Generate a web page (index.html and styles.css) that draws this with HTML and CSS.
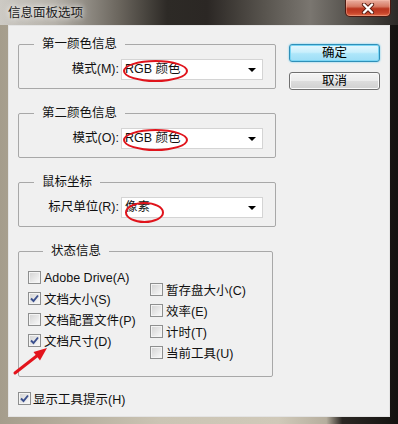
FILE: index.html
```html
<!DOCTYPE html>
<html lang="zh-CN">
<head>
    <meta charset="UTF-8">
    <meta name="viewport" content="width=device-width, initial-scale=1.0">
    <title>信息面板选项</title>
    <link rel="stylesheet" href="styles.css">
</head>
<body>
    <div class="window">
        <div class="titlebar">
            <span class="title">信息面板选项</span>
            <button class="close" aria-label="关闭">
                <svg width="14" height="11" viewBox="0 0 14 11">
                    <path d="M3 1.5 L11 9.5 M11 1.5 L3 9.5" stroke="#5a1d12" stroke-width="4.2" stroke-linecap="round"/>
                    <path d="M3 1.5 L11 9.5 M11 1.5 L3 9.5" stroke="#ffffff" stroke-width="2.4" stroke-linecap="round"/>
                </svg>
            </button>
        </div>

        <div class="frame">
            <div class="client">
                <div class="main">
                    <fieldset class="group">
                        <legend>第一颜色信息</legend>
                        <div class="field">
                            <label class="field-label">模式(M):</label>
                            <div class="combo">
                                <span class="combo-value">RGB 颜色</span>
                                <span class="combo-arrow"></span>
                                <span class="mark mark-wide"></span>
                            </div>
                        </div>
                    </fieldset>

                    <fieldset class="group">
                        <legend>第二颜色信息</legend>
                        <div class="field">
                            <label class="field-label">模式(O):</label>
                            <div class="combo">
                                <span class="combo-value">RGB 颜色</span>
                                <span class="combo-arrow"></span>
                                <span class="mark mark-wide"></span>
                            </div>
                        </div>
                    </fieldset>

                    <fieldset class="group">
                        <legend>鼠标坐标</legend>
                        <div class="field">
                            <label class="field-label">标尺单位(R):</label>
                            <div class="combo">
                                <span class="combo-value">像素</span>
                                <span class="combo-arrow"></span>
                                <span class="mark mark-short"></span>
                            </div>
                        </div>
                    </fieldset>

                    <fieldset class="group group-status">
                        <legend>状态信息</legend>
                        <div class="checks">
                            <div class="check-col">
                                <label class="check"><span class="box"></span>Adobe Drive(A)</label>
                                <label class="check"><span class="box"><svg width="11" height="11" viewBox="0 0 11 11"><path d="M2 5.5 L4.5 8 L9 2.5" fill="none" stroke="#3a4f8d" stroke-width="1.9"/></svg></span>文档大小(S)</label>
                                <label class="check"><span class="box"></span>文档配置文件(P)</label>
                                <label class="check"><span class="box"><svg width="11" height="11" viewBox="0 0 11 11"><path d="M2 5.5 L4.5 8 L9 2.5" fill="none" stroke="#3a4f8d" stroke-width="1.9"/></svg></span>文档尺寸(D)</label>
                            </div>
                            <div class="check-col check-col-right">
                                <label class="check"><span class="box"></span>暂存盘大小(C)</label>
                                <label class="check"><span class="box"></span>效率(E)</label>
                                <label class="check"><span class="box"></span>计时(T)</label>
                                <label class="check"><span class="box"></span>当前工具(U)</label>
                            </div>
                        </div>
                    </fieldset>

                    <label class="check check-tips"><span class="box"><svg width="11" height="11" viewBox="0 0 11 11"><path d="M2 5.5 L4.5 8 L9 2.5" fill="none" stroke="#3a4f8d" stroke-width="1.9"/></svg></span>显示工具提示(H)</label>
                </div>

                <div class="actions">
                    <button class="btn btn-default">确定</button>
                    <button class="btn">取消</button>
                </div>

                <!-- 红色箭头标注 -->
                <svg class="arrow" width="40" height="35" viewBox="0 0 40 35">
                    <path d="M5 30 L28 12" stroke="#e3141c" stroke-width="3" stroke-linecap="round"/>
                    <path d="M37 5 L30 17.5 L23.5 9 Z" fill="#e3141c"/>
                </svg>
            </div>
        </div>
    </div>
</body>
</html>
```

FILE: styles.css
```css
* {
    box-sizing: border-box;
}

body {
    margin: 0;
    font-family: "Liberation Sans", "Noto Sans CJK SC", sans-serif;
    font-size: 12.5px;
    color: #111;
}

.window {
    width: 398px;
    height: 424px;
    display: flex;
    flex-direction: column;
}

.titlebar {
    height: 25px;
    display: flex;
    justify-content: space-between;
    align-items: flex-start;
    background: linear-gradient(90deg, #cdcac4 0%, #b4b0a8 14%, #6a655d 30%, #2d2a26 42%, #2b2724 52%, #57534d 66%, #7a7670 78%, #54514c 88%, #2c2926 100%);
}

.title {
    padding: 5px 0 0 8px;
    font-size: 12.5px;
    line-height: 16px;
    color: #1c1c1c;
    text-shadow: 0 0 5px rgba(255, 255, 255, 0.9), 0 0 9px rgba(255, 255, 255, 0.7);
}

.close {
    width: 46px;
    height: 17px;
    margin-right: 7px;
    padding: 0;
    display: flex;
    align-items: center;
    justify-content: center;
    border: 1px solid #4a1a12;
    border-top: none;
    border-radius: 0 0 5px 5px;
    background: linear-gradient(#eab0a2 0%, #d77a64 40%, #b9341d 55%, #c7432a 80%, #e06a45 100%);
    box-shadow: inset 0 0 0 1px rgba(255, 200, 180, 0.4);
}

.frame {
    flex: 1;
    padding: 0 8px 7px 8px;
    background: linear-gradient(90deg, #a59d8c 0%, #cbc4b4 40%, #d0c9b9 70%, #b6ae9e 82%, #2b2723 86%, #141210 100%);
}

.client {
    position: relative;
    height: 392px;
    display: flex;
    padding: 11px 0 0 10px;
    background: #f0f0f0;
    box-shadow: inset 0 0 0 1px #e4e4e4;
}

.main {
    width: 258px;
    display: flex;
    flex-direction: column;
}

.group {
    margin: 0 0 16px 0;
    padding: 7px 0 8px 0;
    border: 1px solid #a8a8a8;
    border-radius: 2px;
    min-width: 0;
}

.group legend {
    margin-left: 15px;
    padding: 0 8px;
    line-height: 16px;
    font-size: 12.5px;
}

.field {
    display: flex;
    align-items: center;
    height: 21px;
}

.field-label {
    width: 100px;
    text-align: right;
    line-height: 21px;
}

.combo {
    position: relative;
    width: 142px;
    height: 21px;
    margin-left: 2px;
    display: flex;
    align-items: center;
    padding: 0 6px 0 3px;
    background: #fff;
    border: 1px solid #d4d4d4;
}

.combo-value {
    line-height: 19px;
}

.combo-arrow {
    margin-left: auto;
    width: 0;
    height: 0;
    border-left: 4px solid transparent;
    border-right: 4px solid transparent;
    border-top: 4px solid #000;
}

.mark {
    position: absolute;
    left: 1px;
    top: 0;
    height: 22px;
    border: 2px solid #e0141c;
    border-radius: 50%;
}

.mark-wide {
    width: 65px;
}

.mark-short {
    left: 3px;
    top: 4px;
    width: 39px;
    height: 21px;
}

.group-status {
    padding: 8px 0 13px 9px;
    width: 255px;
}

.checks {
    display: flex;
}

.check-col {
    width: 129px;
    display: flex;
    flex-direction: column;
}

.check-col-right {
    padding-top: 12px;
}

.check {
    display: flex;
    align-items: center;
    gap: 3px;
    height: 21px;
    white-space: nowrap;
}

.box {
    width: 13px;
    height: 13px;
    flex: none;
    display: flex;
    align-items: center;
    justify-content: center;
    border: 1px solid #8e8f8f;
    background: linear-gradient(135deg, #d2d2d2 0%, #e6e6e6 50%, #fbfbfb 100%);
    box-shadow: inset 0 0 0 1px #f4f4f4;
}

.check-tips {
    margin-top: -5px;
    gap: 2px;
}

.actions {
    margin: 8px 0 0 13px;
    display: flex;
    flex-direction: column;
    gap: 10px;
}

.btn {
    width: 91px;
    height: 18px;
    padding: 0;
    font-family: inherit;
    font-size: 12.5px;
    line-height: 16px;
    color: #000;
    border: 1px solid #707070;
    border-radius: 3px;
    background: linear-gradient(#f4f4f4 0%, #ebebeb 50%, #dcdcdc 52%, #d0d0d0 100%);
    box-shadow: inset 0 0 0 1px #fafafa;
}

.btn-default {
    border-color: #2f8fb8;
    background: linear-gradient(#e6f7fd 0%, #c9effc 45%, #aee6fa 55%, #9ddef6 100%);
    box-shadow: inset 0 0 0 1px #7ad6f5, 0 0 2px #5ac8ef;
}

.arrow {
    position: absolute;
    left: 2px;
    top: 318px;
    pointer-events: none;
}
```
